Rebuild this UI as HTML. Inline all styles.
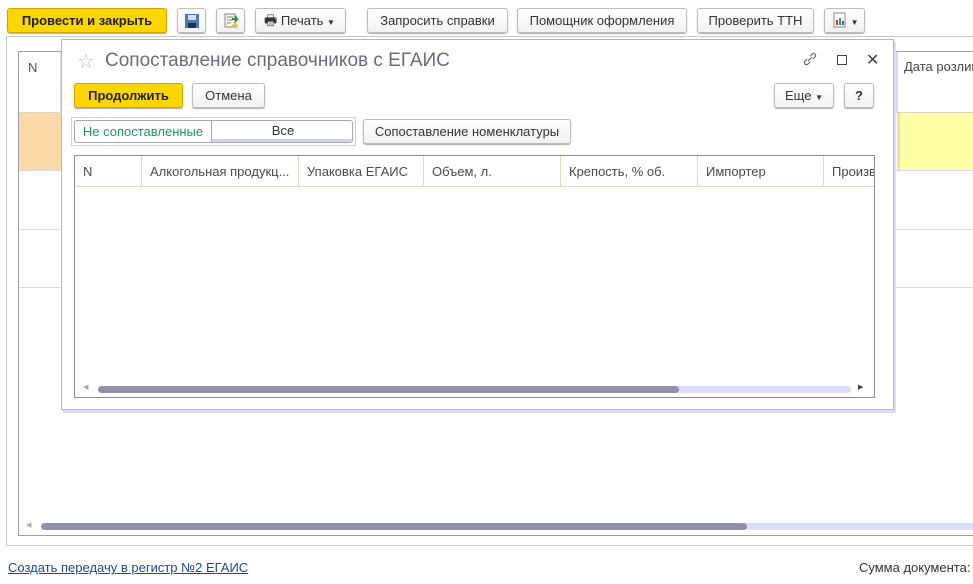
<!DOCTYPE html>
<html><head><meta charset="utf-8"><style>
*{box-sizing:border-box;margin:0;padding:0}
body{width:973px;height:584px;background:#fff;font-family:"Liberation Sans",Arial,sans-serif;font-size:13px;color:#333;position:relative;overflow:hidden}
.a{position:absolute;white-space:nowrap}
.btn{position:absolute;height:25px;border:1px solid #bcbcbc;border-radius:3px;background:linear-gradient(#fff,#f2f2f2);box-shadow:0 1px 1px #aaa;text-align:center;line-height:23px;color:#333;font-size:13px;white-space:nowrap}
.y{background:#fed600;border-color:#c8a800;font-weight:bold;color:#222}
.th{position:absolute;top:0;height:31px;line-height:31px;padding-left:8px;border-right:1px solid #e0dcc0;color:#4a4a4a;white-space:nowrap;overflow:hidden}
</style></head><body>
<div class="btn y" style="left:7px;top:8px;width:160px">Провести и закрыть</div>
<div class="btn" style="left:177px;top:8px;width:29px"><svg width="16" height="16" style="margin-top:4px"><rect x="1" y="1" width="14" height="14" fill="#4a78b8"/><rect x="4" y="2" width="8" height="5" fill="#dde"/><rect x="4" y="10" width="8" height="5" fill="#234"/></svg></div>
<div class="btn" style="left:216px;top:8px;width:29px"><svg width="16" height="16" style="margin-top:4px"><rect x="2" y="1" width="10" height="13" fill="#f4f4e8" stroke="#888"/><path d="M4 4h6M4 7h6M4 10h4" stroke="#888"/><path d="M9 6l5 0-2-3M14 6l-2 3" stroke="#2a9a3a" stroke-width="2" fill="none"/><ellipse cx="12" cy="13" rx="3" ry="2" fill="#e8c030"/></svg></div>
<div class="btn" style="left:255px;top:8px;width:91px;text-align:left;padding-left:8px"><span style="font-size:14px">🖶</span> Печать <span style="font-size:8px">▼</span></div>
<div class="btn" style="left:367px;top:8px;width:141px">Запросить справки</div>
<div class="btn" style="left:517px;top:8px;width:170px">Помощник оформления</div>
<div class="btn" style="left:697px;top:8px;width:117px">Проверить ТТН</div>
<div class="btn" style="left:824px;top:8px;width:41px;text-align:left;padding-left:6px"><svg width="16" height="16" style="vertical-align:-3px"><rect x="3" y="1" width="11" height="14" fill="#fff" stroke="#888"/><rect x="5" y="8" width="2" height="5" fill="#d33"/><rect x="8" y="6" width="2" height="7" fill="#3a3"/><rect x="11" y="9" width="2" height="4" fill="#36c"/></svg> <span style="font-size:8px">▼</span></div>

<div class="a" style="left:6px;top:36px;width:980px;height:510px;border:1px solid #c8c8c0;border-right:none"></div>
<div class="a" style="left:18px;top:51px;width:960px;height:485px;border:1px solid #9a9ab0;border-right:none"></div>
<div class="a" style="left:28px;top:60px;color:#4a4a8a">N</div>
<div class="a" style="left:60px;top:52px;width:2px;height:60px;background:#d8d8f0"></div>
<div class="a" style="left:19px;top:112px;width:960px;height:1px;background:#d8d8b8"></div>
<div class="a" style="left:19px;top:113px;width:42px;height:57px;background:#fdd9a8"></div>
<div class="a" style="left:897px;top:113px;width:80px;height:57px;background:#ffffa8;border-left:3px solid #fdd9a8"></div>
<div class="a" style="left:19px;top:170px;width:960px;height:1px;background:#d8d8f0"></div>
<div class="a" style="left:19px;top:229px;width:960px;height:1px;background:#d8d8f0"></div>
<div class="a" style="left:19px;top:287px;width:960px;height:1px;background:#d8d8f0"></div>
<div class="a" style="left:896px;top:52px;width:2px;height:60px;background:#d8d8f0"></div>
<div class="a" style="left:904px;top:59px;color:#444">Дата розлив</div>
<div class="a" style="left:26px;top:521px;font-size:7px;color:#aaa">◀</div>
<div class="a" style="left:41px;top:523px;width:940px;height:7px;border-radius:4px;background:#dcdcfc"></div>
<div class="a" style="left:41px;top:523px;width:706px;height:7px;border-radius:4px;background:#9090a8"></div>
<div class="a" style="left:8px;top:560px;color:#1a4aa0;text-decoration:underline">Создать передачу в регистр №2 ЕГАИС</div>
<div class="a" style="left:859px;top:560px;color:#333">Сумма документа:</div>

<div class="a" style="left:61px;top:39px;width:833px;height:371px;background:#fff;border:1px solid #b8b8b0;box-shadow:2px 3px 0 #dcdcfa"></div>
<div class="a" style="left:77px;top:49px;font-size:20px;color:#bbb">☆</div>
<div class="a" style="left:105px;top:50px;font-size:19px;color:#6a6a80">Сопоставление справочников с ЕГАИС</div>
<svg class="a" style="left:802px;top:51px" width="16" height="16"><path d="M6 10l4-4M5 8l-2 2a2 2 0 003 3l2-2M11 8l2-2a2 2 0 00-3-3l-2 2" stroke="#666" fill="none" stroke-width="1.2"/></svg>
<div class="a" style="left:837px;top:55px;width:10px;height:10px;border:1.5px solid #444"></div>
<div class="a" style="left:866px;top:50px;font-size:16px;color:#444">✕</div>
<div class="btn y" style="left:74px;top:83px;width:109px">Продолжить</div>
<div class="btn" style="left:192px;top:83px;width:73px">Отмена</div>
<div class="btn" style="left:774px;top:83px;width:60px">Еще <span style="font-size:8px">▼</span></div>
<div class="btn" style="left:844px;top:83px;width:30px;font-weight:bold">?</div>
<div class="a" style="left:71px;top:117px;width:285px;height:29px;border:1px solid #f0d860"></div>
<div class="a" style="left:74px;top:120px;width:279px;height:23px;border:1px solid #a8a8b8;border-radius:3px;overflow:hidden">
<div class="a" style="left:0;top:0;width:137px;height:21px;line-height:21px;text-align:center;color:#1a9a5a;border-right:1px solid #a8a8b8">Не сопоставленные</div>
<div class="a" style="left:137px;top:0;width:142px;height:21px;line-height:20px;text-align:center;border-bottom:3px solid #d0d0f0">Все</div></div>
<div class="btn" style="left:363px;top:119px;width:208px">Сопоставление номенклатуры</div>
<div class="a" style="left:74px;top:155px;width:801px;height:243px;border:1px solid #8a8a98;overflow:hidden">
<div class="a" style="left:0;top:0;width:800px;height:31px;border-bottom:1px solid #e0dcc0"></div>
<div class="th" style="left:0;width:67px">N</div>
<div class="th" style="left:67px;width:157px">Алкогольная продукц...</div>
<div class="th" style="left:224px;width:125px">Упаковка ЕГАИС</div>
<div class="th" style="left:349px;width:137px">Объем, л.</div>
<div class="th" style="left:486px;width:137px">Крепость, % об.</div>
<div class="th" style="left:623px;width:126px">Импортер</div>
<div class="th" style="left:749px;width:60px;border:none">Произв</div>
<div class="a" style="left:8px;top:227px;font-size:7px;color:#aaa">◀</div>
<div class="a" style="left:23px;top:230px;width:753px;height:7px;border-radius:4px;background:#dcdcfc"></div>
<div class="a" style="left:23px;top:230px;width:581px;height:7px;border-radius:4px;background:#9090a8"></div>
<div class="a" style="left:783px;top:227px;font-size:7px;color:#444">▶</div>
</div>
</body></html>
